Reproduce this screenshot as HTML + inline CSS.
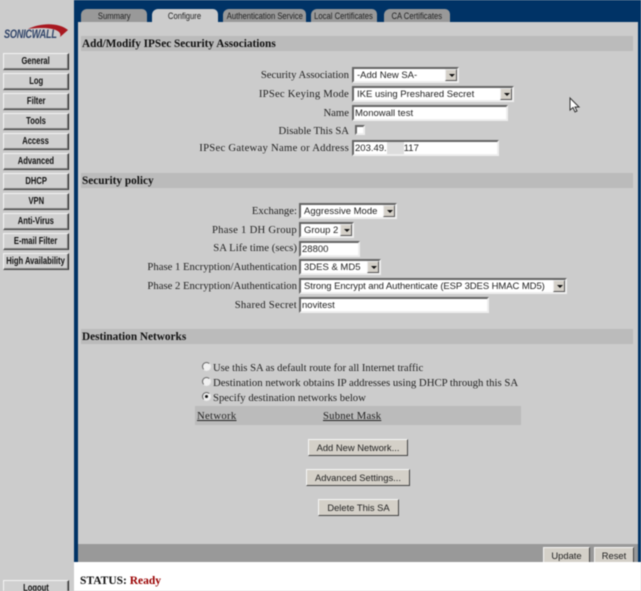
<!DOCTYPE html>
<html><head><meta charset="utf-8"><style>
html,body{margin:0;padding:0}
body{width:641px;height:591px;position:relative;overflow:hidden;background:#ccc;font-family:"Liberation Serif",serif;color:#222}
#w{position:absolute;left:0;top:0;width:641px;height:591px;overflow:hidden;filter:blur(.4px)}
.a{position:absolute}
.nb{position:absolute;left:3px;width:66px;height:17px;box-sizing:border-box;background:#d0d0d0;border:1px solid;border-color:#f4f4f4 #222 #444 #f4f4f4;font:bold 10px/15px "Liberation Sans",sans-serif;color:#111;box-shadow:inset -1px -1px 0 #888;white-space:nowrap;overflow:hidden;display:flex;justify-content:center}
.nb span{display:block;flex-shrink:0;transform:scaleX(.76)}
.tab{position:absolute;top:9px;height:13px;background:#999;border-radius:6px 5px 0 0;font:9px/14px "Liberation Sans",sans-serif;color:#222;white-space:nowrap;display:flex;justify-content:center}
.tab span{display:block;flex-shrink:0;transform:scaleX(.85)}
.sec{position:absolute;left:81px;width:552px;height:15px;background:#bbb;font:bold 11.27px/16px "Liberation Serif",serif;padding-left:1px;box-sizing:border-box;color:#111;white-space:nowrap}
.l{position:absolute;text-align:right;font-size:10.7px;line-height:15px;color:#222;white-space:nowrap}
.f{position:absolute;box-sizing:border-box;background:#fff;border:2px solid;border-color:#666 #eee #eee #666;font:9.5px/14px "Liberation Sans",sans-serif;color:#222;white-space:nowrap;overflow:hidden;padding-left:1px}
.s{padding-left:3px}
.s i{position:absolute;right:0;top:0;bottom:0;width:12px;background:#d4d0c8;border:1px solid;border-color:#eee #555 #555 #eee;box-sizing:border-box}
.s i:after{content:"";position:absolute;left:3px;top:4px;border:3px solid transparent;border-top:3px solid #111;border-bottom:0}
.b{position:absolute;box-sizing:border-box;background:#d4d0c8;border:1px solid;border-color:#f6f6f6 #444 #444 #f6f6f6;font:9.4px/15px "Liberation Sans",sans-serif;text-align:center;color:#222;white-space:nowrap}
.r{position:absolute;left:202px;width:9px;height:9px;border-radius:50%;background:#f0f0f0;border:1px solid;border-color:#666 #eee #eee #666;box-sizing:border-box}
</style></head><body><div id="w">
<div class="a" style="left:74px;top:0;width:567px;height:562px;background:#036"></div>
<div class="a" style="left:78px;top:22px;width:560px;height:522px;background:#ccc"></div>
<div class="a" style="left:78px;top:544px;width:560px;height:18px;background:#999"></div>
<div class="a" style="left:74px;top:562px;width:567px;height:29px;background:#fff"></div>
<div class="a" style="left:638px;top:544px;width:3px;height:18px;background:#036"></div>

<svg class="a" style="left:0;top:0" width="74" height="50" viewBox="0 0 74 50"><path d="M28 29C40 23 58 22 68 30L60 37C63 30 50 26 28 29Z" fill="#a81820"/></svg>
<div class="a" style="left:4px;top:27px;font:italic bold 12px/14px 'Liberation Sans',sans-serif;color:#2f4368;letter-spacing:-.3px;transform:scaleX(.76);transform-origin:left">SONICWALL</div>

<div class="nb" style="top:53px"><span>General</span></div>
<div class="nb" style="top:73px"><span>Log</span></div>
<div class="nb" style="top:93px"><span>Filter</span></div>
<div class="nb" style="top:113px"><span>Tools</span></div>
<div class="nb" style="top:133px"><span>Access</span></div>
<div class="nb" style="top:153px"><span>Advanced</span></div>
<div class="nb" style="top:173px"><span>DHCP</span></div>
<div class="nb" style="top:193px"><span>VPN</span></div>
<div class="nb" style="top:213px"><span>Anti-Virus</span></div>
<div class="nb" style="top:233px"><span>E-mail Filter</span></div>
<div class="nb" style="top:253px"><span>High Availability</span></div>
<div class="nb" style="top:580px;height:20px"><span>Logout</span></div>

<div class="tab" style="left:81px;width:66px"><span>Summary</span></div>
<div class="tab" style="left:152px;width:66px;background:#ccc"><span>Configure</span></div>
<div class="tab" style="left:223px;width:83px"><span>Authentication Service</span></div>
<div class="tab" style="left:311px;width:66px"><span>Local Certificates</span></div>
<div class="tab" style="left:384px;width:66px"><span>CA Certificates</span></div>

<div class="sec" style="top:36px;line-height:17px">Add/Modify IPSec Security Associations</div>
<div class="sec" style="top:173px">Security policy</div>
<div class="sec" style="top:329px">Destination Networks</div>

<div class="l" style="right:292px;top:68px">Security Association</div>
<div class="l" style="right:292px;top:87px;letter-spacing:.2px">IPSec Keying Mode</div>
<div class="l" style="right:292px;top:106px">Name</div>
<div class="l" style="right:292px;top:124px">Disable This SA</div>
<div class="l" style="right:292px;top:141px;letter-spacing:.25px">IPSec Gateway Name or Address</div>
<div class="f s" style="left:352px;top:67px;width:107px;height:16px">-Add New SA-<i></i></div>
<div class="f s" style="left:352px;top:86px;width:162px;height:16px">IKE using Preshared Secret<i></i></div>
<div class="f" style="left:352px;top:105px;width:156px;height:16px">Monowall test</div>
<div class="f" style="left:355px;top:125px;width:10px;height:10px"></div>
<div class="f" style="left:352px;top:140px;width:147px;height:16px">203.49.<span style="display:inline-block;width:17px;height:12px;background:#ddd;vertical-align:top"></span>117</div>

<div class="l" style="right:344px;top:204px">Exchange:</div>
<div class="l" style="right:344px;top:223px;letter-spacing:.25px">Phase 1 DH Group</div>
<div class="l" style="right:344px;top:241px;letter-spacing:.05px">SA Life time (secs)</div>
<div class="l" style="right:344px;top:260px">Phase 1 Encryption/Authentication</div>
<div class="l" style="right:344px;top:279px">Phase 2 Encryption/Authentication</div>
<div class="l" style="right:344px;top:298px;letter-spacing:.25px">Shared Secret</div>
<div class="f s" style="left:299px;top:203px;width:98px;height:16px">Aggressive Mode<i></i></div>
<div class="f s" style="left:299px;top:222px;width:55px;height:16px">Group 2<i></i></div>
<div class="f" style="left:299px;top:241px;width:61px;height:16px">28800</div>
<div class="f s" style="left:299px;top:259px;width:82px;height:16px">3DES &amp; MD5<i></i></div>
<div class="f s" style="left:299px;top:278px;width:268px;height:16px;letter-spacing:-.08px">Strong Encrypt and Authenticate (ESP 3DES HMAC MD5)<i></i></div>
<div class="f" style="left:299px;top:297px;width:190px;height:16px">novitest</div>

<div class="r" style="top:362px"></div>
<div class="r" style="top:377px"></div>
<div class="r" style="top:392px"><div class="a" style="left:2px;top:2px;width:3px;height:3px;border-radius:50%;background:#111"></div></div>
<div class="l" style="left:213px;top:361px;text-align:left;font-size:10.6px">Use this SA as default route for all Internet traffic</div>
<div class="l" style="left:213px;top:376px;text-align:left;font-size:10.77px">Destination network obtains IP addresses using DHCP through this SA</div>
<div class="l" style="left:213px;top:391px;text-align:left">Specify destination networks below</div>
<div class="a" style="left:195px;top:406px;width:326px;height:19px;background:#bbb"></div>
<div class="l" style="left:197px;top:409px;text-decoration:underline;letter-spacing:.3px">Network</div>
<div class="l" style="left:323px;top:409px;text-decoration:underline;letter-spacing:.2px">Subnet Mask</div>

<div class="b" style="left:308px;top:439px;width:100px;height:17px">Add New Network...</div>
<div class="b" style="left:306px;top:469px;width:104px;height:17px">Advanced Settings...</div>
<div class="b" style="left:318px;top:499px;width:81px;height:17px">Delete This SA</div>
<div class="b" style="left:543px;top:547px;width:47px;height:15px;border-bottom:0">Update</div>
<div class="b" style="left:594px;top:547px;width:40px;height:15px;border-bottom:0">Reset</div>

<div class="a" style="left:80px;top:574px;font:bold 11.5px/14px 'Liberation Serif',serif;color:#111">STATUS: <span style="color:#900">Ready</span></div>

<svg class="a" style="left:569px;top:97px" width="12" height="17" viewBox="0 0 12 17"><path d="M1 1V13L4 10.500L6 15L8 14L6 10H10Z" fill="#fff" stroke="#333" stroke-width="1"/></svg>
</div></body></html>
